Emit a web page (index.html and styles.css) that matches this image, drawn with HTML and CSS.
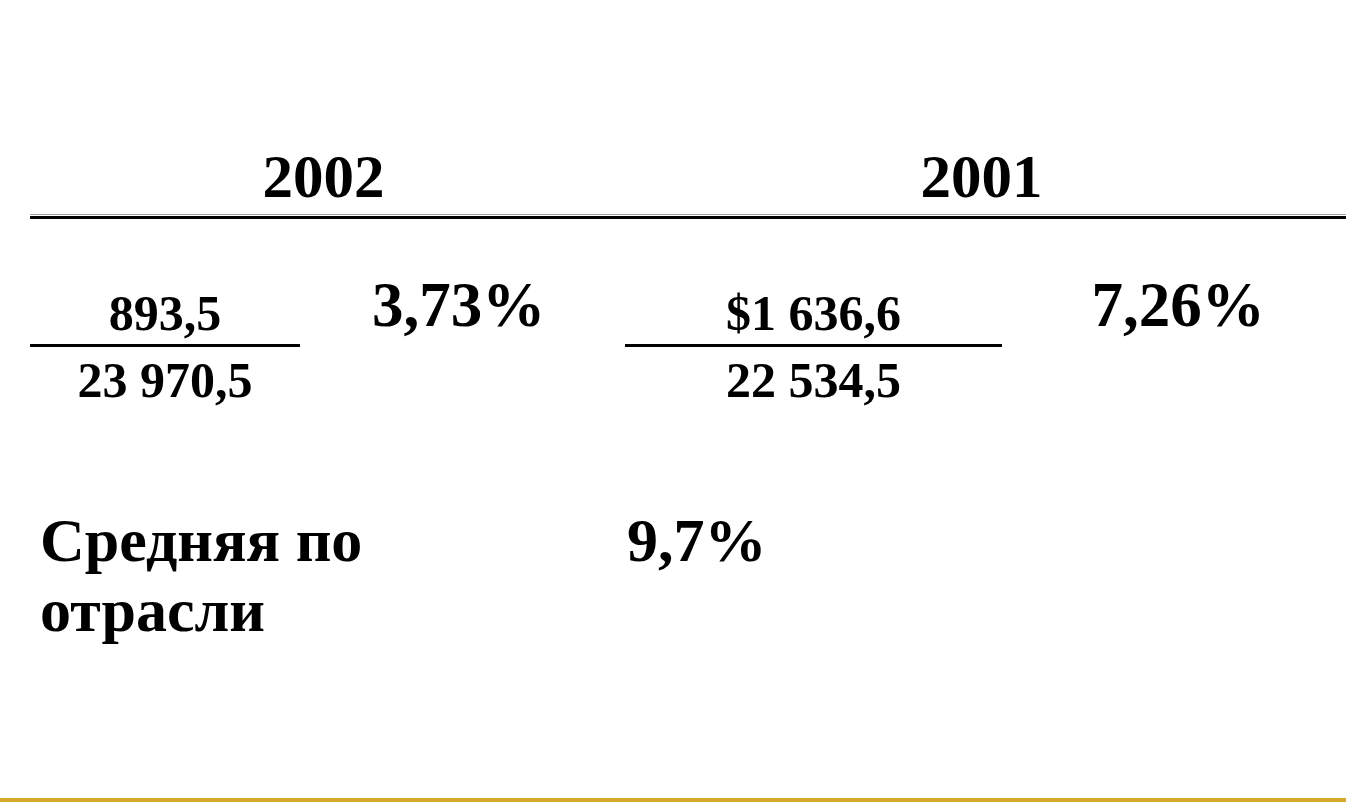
FILE: index.html
```html
<!DOCTYPE html>
<html lang="ru">
<head>
<meta charset="utf-8">
<title>Рентабельность</title>
<link rel="stylesheet" href="styles.css">
</head>
<body>
<div class="slide">
  <div class="grid">
    <div class="hdr span12">2002</div>
    <div class="hdr span34">2001</div>
    <div class="rule"></div>

    <div class="frac frac-a">
      <div class="num">893,5</div>
      <div class="bar"></div>
      <div class="num">23 970,5</div>
    </div>
    <div class="pct">3,73%</div>
    <div class="frac frac-b">
      <div class="num">$1 636,6</div>
      <div class="bar"></div>
      <div class="num">22 534,5</div>
    </div>
    <div class="pct">7,26%</div>

    <div class="label span12">Средняя по<br>отрасли</div>
    <div class="avg span34">9,7%</div>
  </div>
  <div class="gold"></div>
</div>
</body>
</html>
```

FILE: styles.css
```css
html, body {
  margin: 0;
  padding: 0;
  background: #ffffff;
}

body {
  font-family: "Liberation Serif", "Times New Roman", serif;
  font-weight: bold;
  color: #000000;
}

.slide {
  width: 1346px;
  height: 806px;
  display: flex;
  flex-direction: column;
  padding-top: 139px;
  box-sizing: border-box;
  overflow: hidden;
}

.grid {
  margin-left: 30px;
  display: grid;
  grid-template-columns: 270px 317px 393px 336px;
  grid-template-rows: 75px 5px 286px auto;
}

.hdr {
  font-size: 61px;
  line-height: 75px;
  text-align: center;
}

.span12 { grid-column: 1 / 3; }
.span34 { grid-column: 3 / 5; }

.rule {
  grid-column: 1 / 5;
  height: 5px;
  background: linear-gradient(#a0a0a0 0 1px, #ffffff 1px 2px, #000000 2px 5px);
}

.frac {
  padding-top: 67px;
  text-align: center;
}

.frac-b {
  padding-left: 8px;
  padding-right: 8px;
}

.num {
  font-size: 50px;
  line-height: 54px;
}

.bar {
  height: 3px;
  background: #000000;
  margin: 4px 0 6px;
}

.pct {
  padding-top: 51px;
  font-size: 63px;
  line-height: 70px;
  text-align: center;
}

.label {
  padding-left: 10px;
  font-size: 62px;
  line-height: 70px;
}

.avg {
  padding-left: 10px;
  font-size: 62px;
  line-height: 70px;
}

.gold {
  margin-top: auto;
  margin-bottom: 4px;
  height: 4px;
  background: #d4a82a;
}
```
